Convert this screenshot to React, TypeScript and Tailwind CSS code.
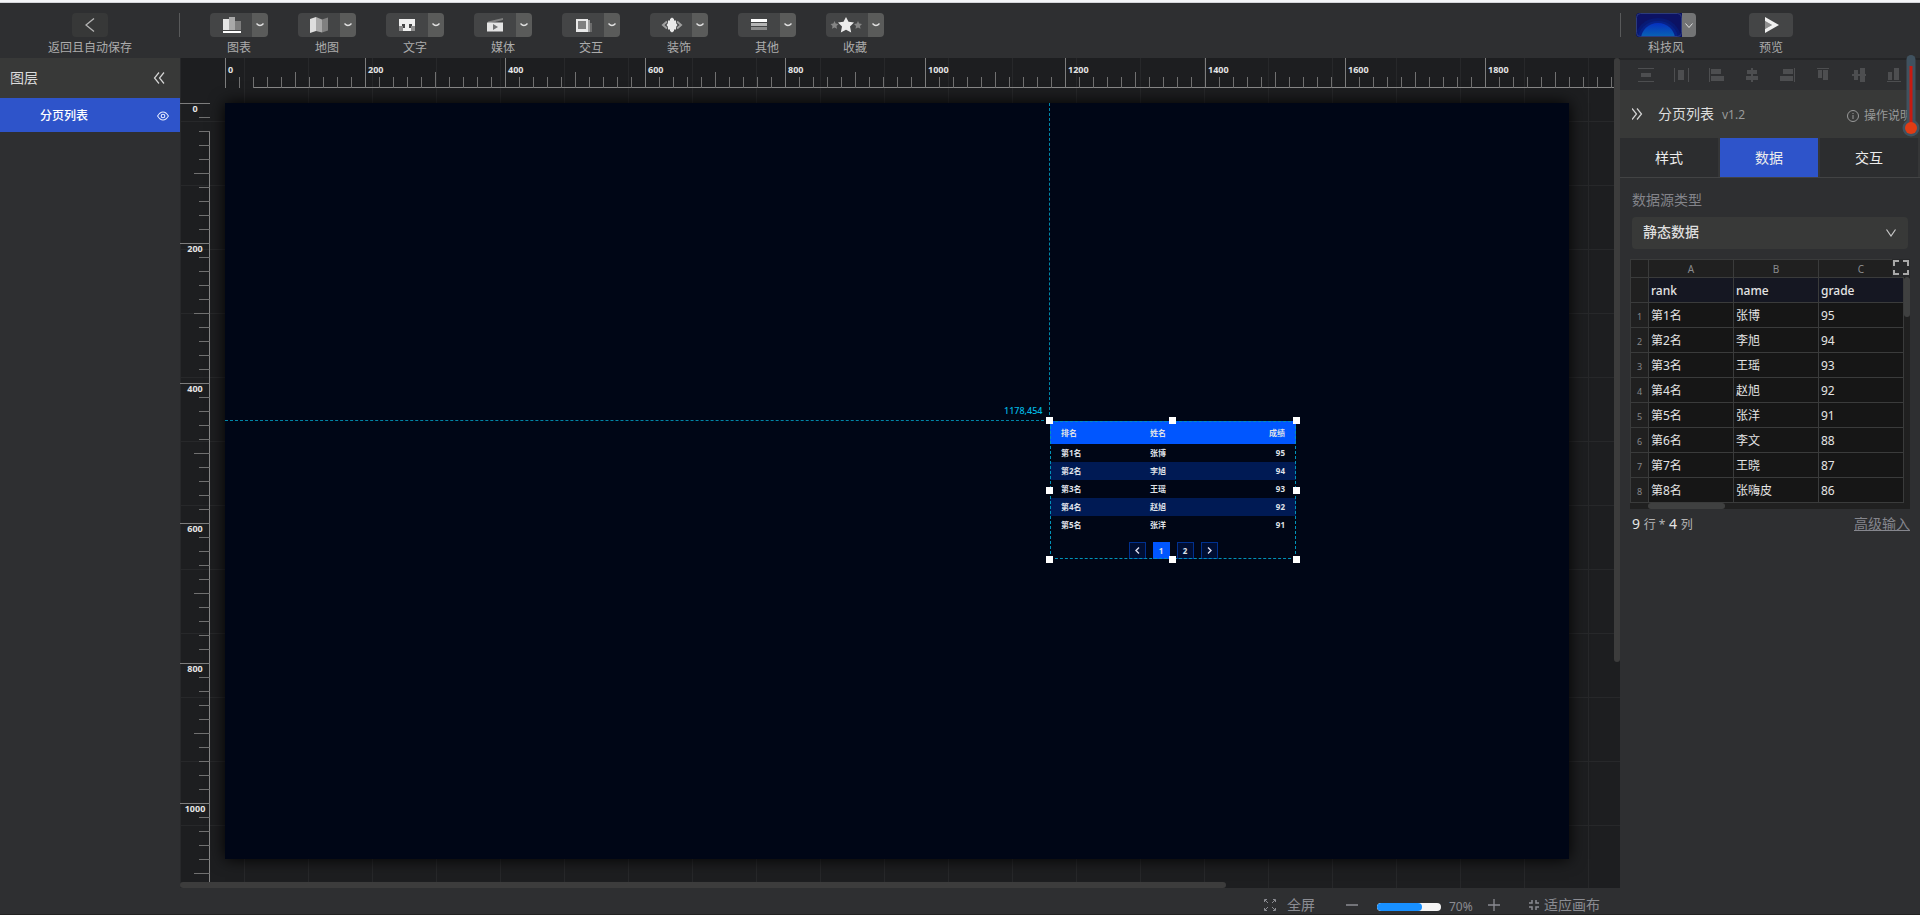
import { useState } from 'react'
import type { ReactNode } from 'react'

const SCALE = 0.7
const STEP = 20 * SCALE

const rows = [
  ['第1名', '张博', '95'],
  ['第2名', '李旭', '94'],
  ['第3名', '王瑶', '93'],
  ['第4名', '赵旭', '92'],
  ['第5名', '张洋', '91'],
  ['第6名', '李文', '88'],
  ['第7名', '王晓', '87'],
  ['第8名', '张嗨皮', '86'],
]

const tools: { label: string; icon: ReactNode }[] = [
  {
    label: '图表',
    icon: (
      <>
        <path fill="#e4e4e4" d="M1 4h6v11H1z" />
        <path fill="#a9a9a9" d="M7 2h6v13H7z" />
        <path fill="#7d7d7d" d="M13 6h6v9h-6z" />
        <path fill="#fff" d="M1 16h18v2H1z" />
      </>
    ),
  },
  {
    label: '地图',
    icon: (
      <>
        <path fill="#dedede" d="M0 4l6-2v14l-6 2z" />
        <path fill="#a9a9a9" d="M6 2l6 2.500v13L6 16z" />
        <path fill="#808080" d="M12 4.500l6-2v13l-6 2z" />
      </>
    ),
  },
  {
    label: '文字',
    icon: (
      <>
        <path fill="#8d8d8d" d="M1 11h4v5H1zM13 11h4v5h-4z" />
        <path fill="#efefef" d="M1 4h16v7h-3V9h-3v4h2v3H5v-3h2V9H4v2H1z" />
      </>
    ),
  },
  {
    label: '媒体',
    icon: (
      <>
        <path fill="#808080" d="M2 6.500L17 3v2L5 8H2z" />
        <path fill="#e4e4e4" d="M1 7.500h16v9H1z" />
        <path fill="#707172" d="M7 9l5 3-5 3z" />
      </>
    ),
  },
  {
    label: '交互',
    icon: (
      <>
        <path fill="#6c6c6c" d="M15 8h3v9h-3z" />
        <path fill="#a0a0a0" d="M13 5h3v12h-3z" />
        <path fill="#e9e9e9" d="M2 4h12v13H2z" />
        <path fill="#808080" d="M4 6h8v8H4z" />
      </>
    ),
  },
  {
    label: '装饰',
    icon: (
      <>
        <path fill="none" stroke="#a0a0a0" strokeWidth="2" d="M5 6.500L1 10l4 3.500M15 6.500l4 3.500-4 3.500" />
        <path fill="#e9e9e9" d="M10 2.500l2 1.500v1.500h2V8l1.500 2-1.500 2v2.500h-2V16l-2 1.500L8 16v-1.500H6V12l-1.500-2L6 8V5.500h2V4z" />
      </>
    ),
  },
  {
    label: '其他',
    icon: (
      <>
        <path fill="#fff" d="M1 4h16v3H1z" />
        <path fill="#b4b4b4" d="M1 8h16v3H1z" />
        <path fill="#8a8a8a" d="M1 12h16v3H1z" />
      </>
    ),
  },
  {
    label: '收藏',
    icon: (
      <>
        <path
          fill="#858585"
          d="M-3.500 6l1.200 2.500 2.800.4-2 2 .5 2.900-2.500-1.400L-6 13.800l.5-2.900-2-2 2.800-.4zM20 6l1.200 2.500 2.800.4-2 2 .5 2.900-2.500-1.400-2.500 1.400.5-2.900-2-2 2.800-.4z"
        />
        <path fill="#ececec" d="M8 2l2.500 4.800 5.500.7-4 4 1.200 6L8 14.700l-5.200 2.800 1.200-6-4-4 5.500-.7z" />
      </>
    ),
  },
]

const alignIcons: { label: string; d: string }[] = [
  { label: '垂直分布', d: 'M0 1h16v1H0zM3 6h10v4H3zM0 14h16v1H0z' },
  { label: '水平分布', d: 'M1 1h1v14H1zM5 3h6v10H5zM15 1h1v14h-1z' },
  { label: '左对齐', d: 'M0 1h1v14H0zM2 2h10v5H2zM2 9h13v5H2z' },
  { label: '水平居中', d: 'M7 1h2v14H7zM3 3h10v4H3zM2 9h12v4H2z' },
  { label: '右对齐', d: 'M14 1h1v14h-1zM3 2h10v5H3zM0 9h13v5H0z' },
  { label: '顶对齐', d: 'M2 1h12v1H2zM3 3h4v8H3zM8 3h5v10H8z' },
  { label: '垂直居中', d: 'M1 7h14v2H1zM3 3h4v10H3zM9 1h5v14H9z' },
  { label: '底对齐', d: 'M1 14h14v1H1zM2 5h4v8H2zM8 1h5v12H8z' },
]

const handles = [
  '-left-1 -top-1',
  'left-[119px] -top-1',
  '-right-1 -top-1',
  '-left-1 top-[66px]',
  '-right-1 top-[66px]',
  '-left-1 -bottom-1',
  'left-[119px] -bottom-1',
  '-right-1 -bottom-1',
]

const ticks = (count: number) => Array.from({ length: count }, (_, i) => i)

function Caret() {
  return (
    <svg width="8" height="4" viewBox="0 0 8 4" fill="none" stroke="#e0e0e0" strokeWidth="1.300">
      <path d="M.5.5Q4 4.500 7.500.5" />
    </svg>
  )
}

function DoubleChevron({ flip = false }: { flip?: boolean }) {
  return (
    <svg width="12" height="12" viewBox="0 0 12 12" fill="none" stroke="#d5d5d5" strokeWidth="1.200">
      {flip ? <path d="M0 .5L4.500 6 0 11.500M5 .5L9.500 6 5 11.500" /> : <path d="M6 .5L1.500 6 6 11.500M11 .5L6.500 6 11 11.500" />}
    </svg>
  )
}

function Header() {
  return (
    <header className="flex h-[55px] shrink-0 bg-[#2e2f31] pt-[10px] text-xs text-[#acacac]">
      <div className="flex w-[180px] shrink-0 flex-col items-center gap-[3px]">
        <div className="flex h-6 w-full justify-center border-r border-[#58595a]">
          <button aria-label="返回" className="flex h-6 w-9 items-center justify-center rounded bg-[#373838]">
            <svg width="10" height="14" viewBox="0 0 10 14" fill="none" stroke="#b5b5b5" strokeWidth="1.300">
              <path d="M9 .5L1 7l8 6.500" />
            </svg>
          </button>
        </div>
        <span className="leading-4">返回且自动保存</span>
      </div>
      <nav className="flex flex-1 gap-[30px] pl-[30px]">
        {tools.map((tool) => (
          <div key={tool.label} className="flex flex-col items-center gap-[3px]">
            <div className="flex h-6 overflow-hidden rounded">
              <button aria-label={tool.label} className="flex w-[42px] items-center justify-center bg-[#444546] pl-[2px]">
                <svg width="20" height="20" viewBox="0 0 20 20" className="overflow-visible">
                  {tool.icon}
                </svg>
              </button>
              <button aria-label={`${tool.label}菜单`} className="flex w-4 items-center justify-center bg-[#5a5b5a]">
                <Caret />
              </button>
            </div>
            <span className="leading-4">{tool.label}</span>
          </div>
        ))}
      </nav>
      <div className="flex w-[300px] shrink-0">
        <div className="h-6 w-px bg-[#58595a]" />
        <div className="ml-[15px] flex flex-col items-center gap-[3px]">
          <div className="flex h-6 overflow-hidden rounded">
            <button aria-label="科技风" className="bg-[#0a1060]">
              <svg width="46" height="24" viewBox="0 0 46 24">
                <defs>
                  <linearGradient id="glow" x1="0" y1="0" x2="0" y2="1">
                    <stop offset="0" stopColor="#0530c0" />
                    <stop offset=".6" stopColor="#0a78ad" />
                  </linearGradient>
                </defs>
                <rect width="46" height="24" fill="#0c1263" />
                <ellipse cx="22" cy="26" rx="23" ry="21" fill="#081a74" />
                <ellipse cx="22" cy="26" rx="20" ry="18" fill="#072188" />
                <ellipse cx="22" cy="26" rx="17" ry="16" fill="url(#glow)" />
                <rect x=".5" y=".5" width="45" height="23" rx="4" fill="none" stroke="#2c3b7c" />
              </svg>
            </button>
            <button aria-label="主题菜单" className="flex w-[14px] items-center justify-center bg-[#737475]">
              <svg width="8" height="5" viewBox="0 0 8 5" fill="none" stroke="#ddd">
                <path d="M.5.5L4 4.500 7.500.5" />
              </svg>
            </button>
          </div>
          <span className="leading-4">科技风</span>
        </div>
        <div className="ml-[53px] flex flex-col items-center gap-[3px]">
          <button aria-label="预览" className="flex h-6 w-11 items-center justify-center rounded bg-[#444546]">
            <svg width="14" height="16" viewBox="0 0 14 16" className="ml-[2px]">
              <path fill="#8e8e8e" d="M0 4l7 4-7 4z" />
              <path fill="#f0f0f0" d="M0 0l14 8-14 8v-4l7-4-7-4z" />
            </svg>
          </button>
          <span className="leading-4">预览</span>
        </div>
      </div>
    </header>
  )
}

function Layers() {
  return (
    <aside className="w-[180px] shrink-0 bg-[#2e2f31]">
      <div className="flex h-10 items-center justify-between bg-[#383938] pl-[10px] pr-[15px] text-sm text-[#dcdcdc]">
        <h2>图层</h2>
        <button aria-label="收起图层">
          <DoubleChevron />
        </button>
      </div>
      <div className="flex h-[34px] items-center justify-between bg-[#2e54ca] pl-10 pr-[11px] pt-[2px] text-xs font-medium text-white">
        <span>分页列表</span>
        <button aria-label="显示图层">
          <svg width="12" height="10" viewBox="0 0 12 10" fill="none" stroke="#e6ebff" strokeWidth="1.100">
            <path d="M.6 5Q3 1 6 1t5.400 4Q9 9 6 9T.6 5z" />
            <circle cx="6" cy="5" r="1.800" />
          </svg>
        </button>
      </div>
    </aside>
  )
}

function Rulers() {
  return (
    <>
      <svg className="absolute left-[45px] top-0 overflow-hidden" width="1389" height="30">
        <path d="M28 29.500H1389" stroke="#858585" />
        {ticks(100).map((i) => {
          const x = i * STEP
          const top = i % 10 === 0 ? 0 : i % 5 === 0 ? 14 : 19
          return <path key={i} d={`M${x + 0.5} ${top}V30`} stroke={i % 10 === 0 ? '#7d7d7d' : '#707070'} />
        })}
        {ticks(10).map((i) => (
          <text key={i} x={i * 140 + 3} y="15" className="fill-[#e4e4e4] text-[9px] font-bold">
            {i * 200}
          </text>
        ))}
      </svg>
      <svg className="absolute left-0 top-[45px] overflow-hidden" width="30" height="779">
        <path d="M29.500 28V779" stroke="#858585" />
        {ticks(56).map((i) => {
          const y = i * STEP
          const left = i % 10 === 0 ? 0 : i % 5 === 0 ? 14 : 19
          return <path key={i} d={`M${left} ${y + 0.5}H30`} stroke={i % 10 === 0 ? '#7d7d7d' : '#707070'} />
        })}
        {ticks(6).map((i) => (
          <text key={i} x="15" y={i * 140 + 9} textAnchor="middle" className="fill-[#e4e4e4] text-[9px] font-bold">
            {i * 200}
          </text>
        ))}
      </svg>
    </>
  )
}

function PagedList() {
  const pageButton = 'flex size-[17px] items-center justify-center border border-[#00308f] bg-[#000e33]'
  return (
    <div className="absolute left-[825px] top-[318px] h-[138px] w-[246px] text-[8px] font-bold text-[#dfe1e8]">
      <table className="w-full table-fixed border-collapse">
        <thead className="leading-3">
          <tr className="h-[23px] bg-[#0056ff]">
            <th className="w-[89px] p-0 pl-[11px] text-left">排名</th>
            <th className="p-0 pl-[11px] text-left">姓名</th>
            <th className="p-0 pr-[11px] text-right">成绩</th>
          </tr>
        </thead>
        <tbody className="leading-3">
          {rows.slice(0, 5).map(([rank, name, grade]) => (
            <tr key={rank} className="h-[18px] even:bg-[#001a54]">
              <td className="pl-[11px]">{rank}</td>
              <td className="pl-[11px]">{name}</td>
              <td className="pr-[11px] text-right">{grade}</td>
            </tr>
          ))}
        </tbody>
      </table>
      <div className="mt-2 flex justify-center gap-[7px]">
        <button aria-label="上一页" className={pageButton}>
          <svg width="5" height="7" viewBox="0 0 5 7" fill="none" stroke="#dde" strokeWidth="1.400">
            <path d="M4 .5l-3 3 3 3" />
          </svg>
        </button>
        <button className="flex size-[17px] items-center justify-center bg-[#0056ff]">1</button>
        <button className={pageButton}>2</button>
        <button aria-label="下一页" className={pageButton}>
          <svg width="5" height="7" viewBox="0 0 5 7" fill="none" stroke="#dde" strokeWidth="1.400">
            <path d="M1 .5l3 3-3 3" />
          </svg>
        </button>
      </div>
      <div className="pointer-events-none absolute inset-0 border border-dashed border-[#0092b8]" />
      {handles.map((pos) => (
        <span key={pos} className={`absolute size-[7px] bg-white ${pos}`} />
      ))}
    </div>
  )
}

function Workspace() {
  return (
    <div className="relative min-h-0 flex-1 overflow-hidden bg-[#1d1e20] bg-[linear-gradient(to_right,#27282a_1px,transparent_1px),linear-gradient(to_bottom,#27282a_1px,transparent_1px)] bg-[size:64px_64px] bg-[position:0_-1px]">
      <div className="absolute left-[45px] top-[45px] h-[756px] w-[1344px] bg-[#000616] shadow-[0_0_15px_#000]">
        <div className="absolute left-[824px] top-0 h-[317px] border-l border-dashed border-[#0086a8]" />
        <div className="absolute left-0 top-[317px] w-[824px] border-t border-dashed border-[#0086a8]" />
        <span className="absolute left-[779px] top-[302px] text-[9px] font-medium leading-3 text-[#00b8e4]">1178,454</span>
        <PagedList />
      </div>
      <Rulers />
      <div className="absolute bottom-0 left-0 h-[6px] w-[1046px] rounded-full bg-[#3c3c3c]" />
      <div className="absolute right-0 top-0 h-[604px] w-[6px] rounded-full bg-[#3c3c3c]" />
    </div>
  )
}

function Footer() {
  const [zoom, setZoom] = useState(70)
  return (
    <footer className="flex h-[26px] shrink-0 items-center justify-end bg-[#2e2f31] pr-5 pt-2 text-sm text-[#8b8c92]">
      <button className="flex items-center gap-[11px] leading-4">
        <svg width="12" height="12" viewBox="0 0 12 12" fill="none" stroke="currentColor">
          <path d="M.5 3V.5H3M1 1l3 3M9 .5h2.500V3M11 1L8 4M.5 9v2.500H3M1 11l3-3M9 11.500h2.500V9M11 11L8 8" />
        </svg>
        全屏
      </button>
      <button aria-label="缩小" className="ml-[31px]">
        <svg width="12" height="12" viewBox="0 0 12 12" stroke="currentColor" strokeWidth="1.500">
          <path d="M0 6h12" />
        </svg>
      </button>
      <div className="relative ml-[19px] mt-1 h-2 w-16 overflow-hidden rounded-full bg-[#f5f5f5]">
        <div className="h-full rounded-full bg-[#1890ff]" style={{ width: `${zoom}%` }} />
        <input
          type="range"
          aria-label="缩放比例"
          min={10}
          max={100}
          value={zoom}
          onChange={(e) => setZoom(Number(e.target.value))}
          className="absolute inset-0 w-full opacity-0"
        />
      </div>
      <span className="ml-2 w-7 pt-1 text-xs">{zoom}%</span>
      <button aria-label="放大" className="ml-[11px]">
        <svg width="12" height="12" viewBox="0 0 12 12" stroke="currentColor" strokeWidth="1.300">
          <path d="M0 6h12M6 0v12" />
        </svg>
      </button>
      <button className="ml-[29px] flex items-center gap-[5px] leading-4">
        <svg width="10" height="10" viewBox="0 0 10 10" fill="none" stroke="currentColor" strokeWidth="1.500">
          <path d="M0 3h3V0M7 0v3h3M0 7h3v3M10 7H7v3" />
        </svg>
        适应画布
      </button>
    </footer>
  )
}

function DataTable() {
  return (
    <div className="relative mt-[10px] bg-[#202020] pb-[6px] pr-[6px] text-xs text-[#e4e4e4]">
      <table className="w-full table-fixed border-collapse">
        <thead>
          <tr className="h-[18px] text-[10px] leading-4 text-[#8a8b8e]">
            <th className="w-[18px] border border-[#3a3b3b]" />
            {['A', 'B', 'C'].map((col) => (
              <th key={col} className="border border-[#3a3b3b] p-0 font-normal">
                {col}
              </th>
            ))}
          </tr>
          <tr className="h-[25px] bg-[#151722]">
            <th className="border border-[#3a3b3b] bg-[#202020]" />
            {['rank', 'name', 'grade'].map((field) => (
              <th key={field} className="border border-[#3a3b3b] p-0 pl-[2px] pt-[2px] text-left font-medium">
                {field}
              </th>
            ))}
          </tr>
        </thead>
        <tbody>
          {rows.map((row, i) => (
            <tr key={row[0]} className="h-[25px] bg-[#161616]">
              <th className="border border-[#3a3b3b] bg-[#202020] p-0 pt-[3px] text-[9px] font-normal text-[#87888b]">{i + 1}</th>
              {row.map((cell) => (
                <td key={cell} className="border border-[#3a3b3b] p-0 pl-[2px] pt-[2px]">
                  {cell}
                </td>
              ))}
            </tr>
          ))}
        </tbody>
      </table>
      <div className="absolute right-0 top-[18px] h-10 w-[6px] rounded-full bg-[#3f4040]" />
      <div className="absolute bottom-0 left-[18px] h-[6px] w-[77px] rounded-full bg-[#3f4040]" />
      <button aria-label="展开表格" className="absolute right-0 top-0 flex size-[18px] items-center justify-center bg-[#27282a]">
        <svg width="16" height="16" viewBox="0 0 16 16" fill="none" stroke="#a8a8a8" strokeWidth="2">
          <path d="M1 6V1h5M10 1h5v5M1 10v4h5M10 14h5v-4" />
        </svg>
      </button>
    </div>
  )
}

function Inspector() {
  const [tab, setTab] = useState('数据')
  return (
    <aside className="relative w-[300px] shrink-0 border-t-2 border-[#242527] bg-[#2e2f31]">
      <div className="flex h-[30px] items-center px-2 text-[#4d4e50]">
        {alignIcons.map((icon) => (
          <button key={icon.label} aria-label={icon.label} className="flex flex-1 justify-center">
            <svg width="16" height="16" viewBox="0 0 16 16" fill="currentColor">
              <path d={icon.d} />
            </svg>
          </button>
        ))}
      </div>
      <div className="flex h-12 items-center bg-[#383938] pl-3 pr-2 text-[#999a9a]">
        <button aria-label="收起面板">
          <DoubleChevron flip />
        </button>
        <h2 className="ml-[14px] text-sm text-[#dedede]">分页列表</h2>
        <span className="ml-2 pt-[2px] text-xs">v1.2</span>
        <a href="#help" className="ml-auto flex items-center gap-[5px] pt-[3px] text-xs">
          <svg width="12" height="12" viewBox="0 0 12 12" fill="none" stroke="currentColor">
            <circle cx="6" cy="6" r="5.500" />
            <path d="M6 5v4M6 3v1" />
          </svg>
          操作说明
        </a>
      </div>
      <div role="tablist" className="flex h-10 gap-[2px] border-b border-[#424344] bg-[#353637] pr-[2px] text-sm text-[#ececec]">
        {['样式', '数据', '交互'].map((name) => (
          <button
            key={name}
            role="tab"
            aria-selected={tab === name}
            onClick={() => setTab(name)}
            className={`flex-1 ${tab === name ? 'bg-[#2e54ca]' : 'bg-[#2c2d2f]'}`}
          >
            {name}
          </button>
        ))}
      </div>
      <div className="px-[10px] pt-3 text-sm">
        <label htmlFor="source" className="block px-[2px] leading-5 text-[#83848a]">
          数据源类型
        </label>
        <div className="relative mt-[7px] px-[2px]">
          <select id="source" className="block h-8 w-full appearance-none rounded bg-[#383938] pb-[2px] pl-[11px] text-sm font-medium text-[#dedede]">
            <option>静态数据</option>
          </select>
          <svg className="pointer-events-none absolute right-[14px] top-3" width="10" height="8" viewBox="0 0 10 8" fill="none" stroke="#c8c8c8" strokeWidth="1.200">
            <path d="M.5 .5L5 7 9.500.5" />
          </svg>
        </div>
        <DataTable />
        <div className="mt-[5px] flex items-center justify-between leading-5">
          <p className="pl-[2px] text-[#e4e4e4]">
            9 <span className="text-xs text-[#b4b4b4]">行 *</span> 4 <span className="text-xs text-[#b4b4b4]">列</span>
          </p>
          <a href="#advanced" className="text-[#85868d] underline">
            高级输入
          </a>
        </div>
      </div>
      <svg className="absolute -top-[5px] right-0" width="18" height="84" viewBox="0 0 18 84">
        <rect x="4.500" y="0" width="9" height="76" rx="4.500" fill="#40525f" />
        <circle cx="9" cy="73" r="8.500" fill="#40525f" />
        <rect x="7.500" y="11" width="3" height="62" fill="#c81a10" />
        <circle cx="9" cy="73" r="6" fill="#e03c14" />
      </svg>
    </aside>
  )
}

export default function App() {
  return (
    <div className="flex h-screen flex-col overflow-hidden border-b border-[#222] bg-[#2e2f31] font-['Noto_Sans','Noto_Sans_CJK_SC',sans-serif]">
      <div className="h-[3px] shrink-0 border-b border-[#d4d5d9] bg-[#f4f5f8]" />
      <Header />
      <div className="flex min-h-0 flex-1">
        <Layers />
        <main className="flex min-w-0 flex-1 flex-col">
          <Workspace />
          <Footer />
        </main>
        <Inspector />
      </div>
    </div>
  )
}
